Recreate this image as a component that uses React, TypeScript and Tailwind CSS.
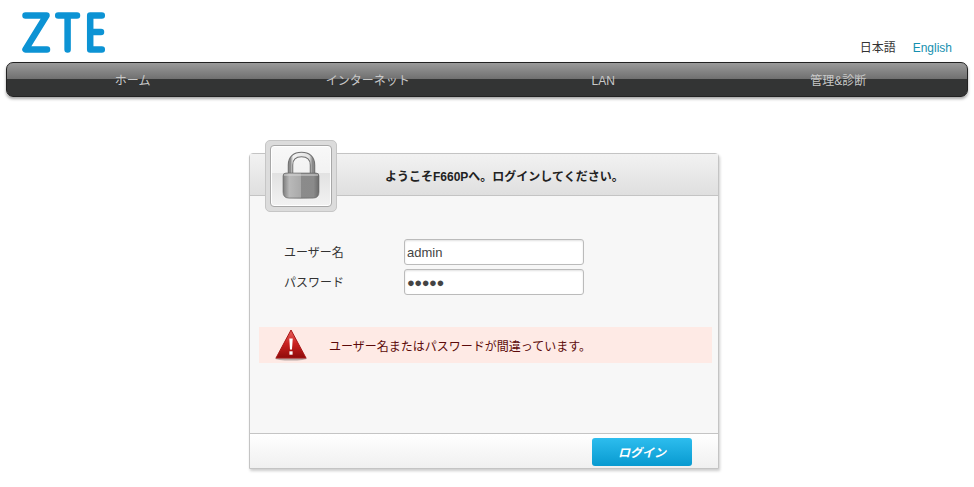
const font = 'font-["Liberation_Sans","Noto_Sans_CJK_JP",sans-serif]';

function Logo() {
  return (
    <svg width="84" height="41" viewBox="0 0 84 41" fill="none" stroke="#0c93d4" strokeWidth="6.5" strokeLinecap="round" strokeLinejoin="round">
      <path d="M3.500 3.500H24.500L3.500 37.500H25" />
      <path d="M36.200 3.500H55M45.600 3.500V37.500" />
      <path d="M79.800 3.500H68.200V37.500H79.800M68.200 20H79" />
    </svg>
  );
}

function LockIcon() {
  return (
    <svg width="40" height="48" viewBox="0 0 40 48" className="mb-[2px]">
      <defs>
        <linearGradient id="shackle" x1="0" y1="0" x2="1" y2="0">
          <stop offset="0" stopColor="#8d8d8d" />
          <stop offset="0.12" stopColor="#f2f2f2" />
          <stop offset="0.85" stopColor="#e2e2e2" />
          <stop offset="1" stopColor="#8a8a8a" />
        </linearGradient>
        <linearGradient id="bodyLeft" x1="0" y1="0" x2="1" y2="0">
          <stop offset="0" stopColor="#7c7c7c" />
          <stop offset="0.35" stopColor="#b9b9b9" />
          <stop offset="1" stopColor="#a9a9a9" />
        </linearGradient>
        <linearGradient id="bodyRight" x1="0" y1="0" x2="1" y2="0">
          <stop offset="0" stopColor="#8b8b8b" />
          <stop offset="0.7" stopColor="#8a8a8a" />
          <stop offset="1" stopColor="#6a6a6a" />
        </linearGradient>
      </defs>
      <path d="M9.500 24V14C9.500 7 14 3.500 20.500 3.500C27 3.500 31.500 7 31.500 14V24" fill="none" stroke="#707070" strokeWidth="5.500" />
      <path d="M9.500 24V14C9.500 7 14 3.500 20.500 3.500C27 3.500 31.500 7 31.500 14V24" fill="none" stroke="url(#shackle)" strokeWidth="3.500" />
      <ellipse cx="20" cy="46.500" rx="16" ry="1.500" fill="#00000035" />
      <path d="M2 25Q2 22 5 22H20V47H8Q2 47 2 41Z" fill="url(#bodyLeft)" />
      <path d="M20 22H35Q38 22 38 25V41Q38 47 32 47H20Z" fill="url(#bodyRight)" />
      <path d="M2 25Q2 22 5 22H35Q38 22 38 25V41Q38 47 32 47H8Q2 47 2 41Z" fill="none" stroke="#666666" strokeWidth="0.600" />
      <path d="M3 24H37" stroke="#d8d8d8" strokeWidth="1" />
    </svg>
  );
}

function WarningIcon() {
  return (
    <svg width="34" height="32" viewBox="0 0 34 32">
      <defs>
        <linearGradient id="warn" x1="0" y1="0" x2="0" y2="1">
          <stop offset="0" stopColor="#e8605c" />
          <stop offset="0.5" stopColor="#c9201f" />
          <stop offset="1" stopColor="#8e0b0b" />
        </linearGradient>
      </defs>
      <ellipse cx="17" cy="29.500" rx="16" ry="2" fill="#00000045" />
      <path d="M17 1L32 29H2Z" fill="url(#warn)" stroke="#a81616" strokeWidth="1" strokeLinejoin="round" />
      <path d="M15.300 9.500H18.700L18 20.500H16Z" fill="#ffffff" />
      <rect x="15.400" y="22.300" width="3.200" height="3.400" fill="#ffffff" />
    </svg>
  );
}

export default function App() {
  return (
    <div className={`${font} h-[487px] w-[974px] overflow-hidden bg-white text-xs text-[#333333]`}>
      <div className="flex h-[62px] items-end justify-between px-[22px]">
        <div className="mb-[9px]">
          <Logo />
        </div>
        <div className="mb-[6px] flex gap-[17px] leading-[16px]">
          <span>日本語</span>
          <span className="text-[#1590b0]">English</span>
        </div>
      </div>

      <nav className="mx-[6px] grid h-[35px] grid-cols-4 rounded-[7px] border border-[#222222] bg-[linear-gradient(#9a9a9a_0%,#6e6e6e_50%,#333434_50%,#333434_100%)] pl-[8px] pr-[11px] text-[#c8c8c8] shadow-[0_2px_3px_rgba(0,0,0,0.35)]">
        <div className="text-center leading-[36px]">ホーム</div>
        <div className="text-center leading-[36px]">インターネット</div>
        <div className="text-center leading-[36px]">LAN</div>
        <div className="text-center leading-[36px]">管理&amp;診断</div>
      </nav>

      <div className="relative ml-[249px] mt-[56px] flex h-[316px] w-[470px] flex-col rounded-t-[4px] border border-[#c4c4c4] bg-[#f7f7f7] shadow-[1px_2px_3px_rgba(0,0,0,0.2)]">
        <div className="absolute left-[15px] top-[-14px] flex h-[72px] w-[72px] items-center justify-center rounded-[5px] border border-[#c6c6c6] bg-[#dcdcdc]">
          <div className="flex h-[62px] w-[62px] items-center justify-center rounded-[4px] border border-[#a8a8a8] bg-[linear-gradient(#f8f8f8_0%,#f2f2f2_45%,#e2e2e2_45%,#f2f2f2_100%)] shadow-[inset_0_0_0_1px_#ffffff]">
            <LockIcon />
          </div>
        </div>

        <div className="flex h-[42px] items-center border-b border-[#c4c4c4] bg-[linear-gradient(#f2f2f2,#dfdfdf)] pl-[135px] pt-[5px] font-bold text-[#222222]">
          ようこそF660Pへ。ログインしてください。
        </div>

        <div className="flex-1">
          <div className="mt-[43px] flex flex-col gap-[4px] pl-[34px]">
            <div className="flex items-center">
              <span className="w-[120px] pt-[2px]">ユーザー名</span>
              <div className="flex h-[26px] w-[180px] items-center rounded-[3px] border border-[#bbbbbb] bg-white pl-[2px] pt-[2px] text-[13px] text-[#444444] shadow-[inset_0_1px_2px_rgba(0,0,0,0.12)]">
                admin
              </div>
            </div>
            <div className="flex items-center">
              <span className="w-[120px] pt-[2px]">パスワード</span>
              <div className="flex h-[26px] w-[180px] items-center rounded-[3px] border border-[#bbbbbb] bg-white pl-[2px] pt-[2px] text-[13px] tracking-[-0.5px] text-[#444444] shadow-[inset_0_1px_2px_rgba(0,0,0,0.12)]">
                ●●●●●
              </div>
            </div>
          </div>

          <div className="ml-[9px] mt-[32px] flex h-[36px] w-[453px] items-center bg-[#feeae5] pl-[15px] text-[#5c0a0a]">
            <WarningIcon />
            <span className="ml-[21px] pt-[3px]">ユーザー名またはパスワードが間違っています。</span>
          </div>
        </div>

        <div className="flex h-[35px] items-center justify-end border-t border-[#c4c4c4] bg-[linear-gradient(#ffffff,#f0f0f0)] pr-[26px]">
          <button className="mt-[2px] h-[28px] w-[100px] rounded-[3px] bg-[linear-gradient(#2dbdee,#089ad0)] pt-[2px] font-bold italic text-white">
            ログイン
          </button>
        </div>
      </div>
    </div>
  );
}
